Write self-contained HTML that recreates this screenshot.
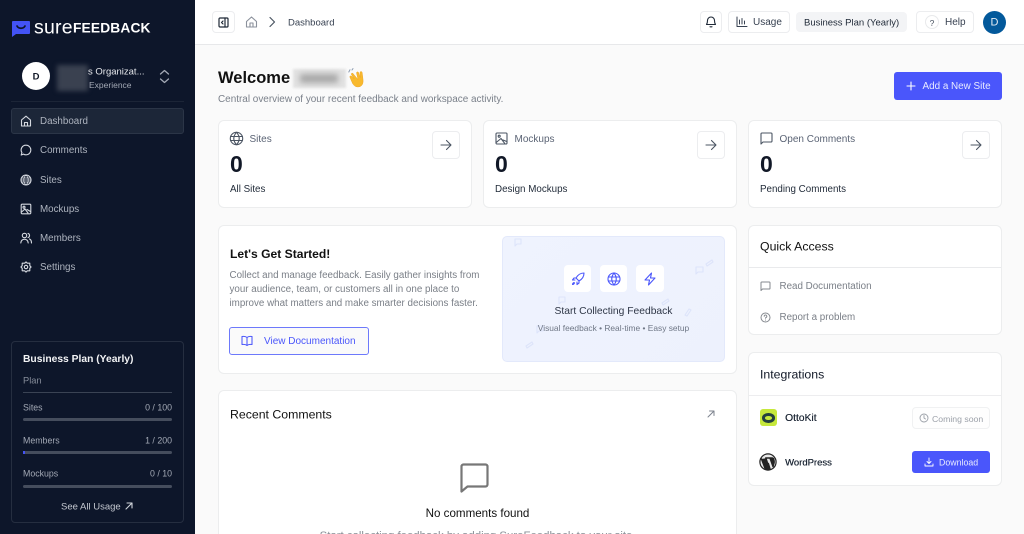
<!DOCTYPE html>
<html lang="en"><head><meta charset="utf-8"><title>SureFeedback Dashboard</title>
<style>
*{box-sizing:border-box}
html,body{margin:0;padding:0;width:1024px;height:534px;overflow:hidden;background:#fafafa;font-family:"Liberation Sans",sans-serif}
#p{position:relative;width:1024px;height:534px;overflow:hidden}
.a{position:absolute}
.t{position:absolute;white-space:nowrap;transform:translateY(-50%);line-height:1.2;margin-top:1.400px}
.c{text-align:center;transform:translate(-50%,-50%)}
.r{transform:translate(-100%,-50%)}
.card{position:absolute;background:#fff;border:1px solid #ecedee;border-radius:6px}
.btn{position:absolute;background:#fff;border:1px solid #ecedef;border-radius:4px}
svg{position:absolute;fill:none;stroke-linecap:round;stroke-linejoin:round}
.n{color:#aeb4bf;font-size:9.800px;left:40px}
.n2{stroke:#d5d9e0;stroke-width:1.100}
.bar{position:absolute;left:23px;width:149px;height:3px;border-radius:2px;background:#454d5d}
.sm{color:#a3a9b5;font-size:8.800px}
.lbl{color:#5b6475;font-size:10px}
.zero{color:#111827;font-size:23px;font-weight:bold}
.sub{color:#1f2937;font-size:9.800px}
</style></head><body><div id="p">

<!-- Sidebar -->
<div class="a" style="left:0;top:0;width:195px;height:534px;background:#0d162a"></div>
<svg style="left:11px;top:20px" width="20" height="18" viewBox="0 0 20 18"><path d="M2 1h16a1 1 0 0 1 1 1v11a1 1 0 0 1-1 1H5l-4 3V2a1 1 0 0 1 1-1z" fill="#4353f5"/><path d="M6 6c1.500 3 6.500 3 8 0" stroke="#0d162a" stroke-width="1.700"/></svg>
<div class="t" style="left:34px;top:27px;color:#fff;font-size:19.500px;letter-spacing:.2px">sure</div>
<div class="t" style="left:73px;top:28px;color:#fff;font-size:13.800px;font-weight:bold;letter-spacing:.12px">FEEDBACK</div>

<div class="a" style="left:22px;top:62px;width:28px;height:28px;border-radius:50%;background:#fff"></div>
<div class="t c" style="left:36px;top:76px;color:#111827;font-size:9.500px;font-weight:bold">D</div>
<div class="a" style="left:57px;top:65px;width:31px;height:26px;background:#3a4150;filter:blur(2.500px)"></div>
<div class="t" style="left:88px;top:71px;color:#e5e7eb;font-size:9.500px">s Organizat...</div>
<div class="t" style="left:89px;top:83.500px;color:#a3a9b5;font-size:8.500px">Experience</div>
<svg style="left:158px;top:69px" width="13" height="15" viewBox="0 0 13 15" stroke="#a3a9b5" stroke-width="1.300"><path d="M2.500 5l4-3.500 4 3.500M2.500 10l4 3.500 4-3.500"/></svg>
<div class="a" style="left:11px;top:101px;width:173px;height:1px;background:#1c2537"></div>

<div class="a" style="left:11px;top:108px;width:173px;height:26px;background:#1c2638;border:1px solid #2b3547;border-radius:3px"></div>
<svg class="n2" style="left:20px;top:115px" width="12" height="12" viewBox="0 0 12 12"><path d="M1.500 5L6 1.200 10.500 5v6h-9zM4.500 11V7.500h3V11"/></svg>
<div class="t n" style="top:121px">Dashboard</div>
<svg class="n2" style="left:20px;top:144px" width="12" height="12" viewBox="0 0 12 12"><path d="M6 1.200a4.800 4.800 0 1 1-2.500 8.900L1.200 11l.7-2.400A4.800 4.800 0 0 1 6 1.200z"/></svg>
<div class="t n" style="top:150px">Comments</div>
<svg class="n2" style="left:20px;top:173.500px" width="12" height="12" viewBox="0 0 12 12"><circle cx="6" cy="6" r="5"/><path d="M1 6h10M1.500 4h9M1.500 8h9M6 1c-3 3-3 7 0 10M6 1c3 3 3 7 0 10" stroke-width=".8"/></svg>
<div class="t n" style="top:179.500px">Sites</div>
<svg class="n2" style="left:20px;top:203px" width="12" height="12" viewBox="0 0 12 12"><rect x="1.200" y="1.200" width="9.600" height="9.600" rx="1"/><circle cx="4" cy="4.200" r="1"/><path d="M1.500 9L5 6l3 4M7 6.500l3.500 2"/></svg>
<div class="t n" style="top:208.500px">Mockups</div>
<svg class="n2" style="left:20px;top:232px" width="12" height="12" viewBox="0 0 12 12"><circle cx="4.500" cy="3.500" r="2.200"/><path d="M.8 11c0-5 7.400-5 7.400 0M8 1.400a2.200 2.200 0 0 1 0 4.200M9.500 7c1.200.5 2 1.800 2 4"/></svg>
<div class="t n" style="top:238px">Members</div>
<svg class="n2" style="left:20px;top:261px" width="12" height="12" viewBox="0 0 12 12"><path d="M6 .9l1.300 1.300h2.500v2.500L11.100 6 9.800 7.300v2.500H7.300L6 11.100 4.700 9.800H2.200V7.300L.9 6l1.300-1.300V2.200h2.500z"/><circle cx="6" cy="6" r="1.700"/></svg>
<div class="t n" style="top:267px">Settings</div>

<div class="a" style="left:11px;top:341px;width:173px;height:182px;border:1px solid #252e40;border-radius:4px"></div>
<div class="t" style="left:23px;top:358.500px;color:#f3f4f6;font-size:10.300px;font-weight:bold">Business Plan (Yearly)</div>
<div class="t" style="left:23px;top:380px;color:#858c99;font-size:9.300px">Plan</div>
<div class="a" style="left:23px;top:392px;width:149px;height:1px;background:#3a4354"></div>
<div class="t sm" style="left:23px;top:406.500px">Sites</div><div class="t sm r" style="left:172px;top:406.500px">0 / 100</div>
<div class="bar" style="top:418px"></div>
<div class="t sm" style="left:23px;top:440px">Members</div><div class="t sm r" style="left:172px;top:440px">1 / 200</div>
<div class="bar" style="top:451px"></div><div class="a" style="left:23px;top:451px;width:2px;height:3px;background:#4353f5"></div>
<div class="t sm" style="left:23px;top:473px">Mockups</div><div class="t sm r" style="left:172px;top:473px">0 / 10</div>
<div class="bar" style="top:485px"></div>
<div class="t" style="left:61px;top:505.500px;color:#c4c8d0;font-size:9.500px">See All Usage</div>
<svg style="left:124px;top:501px" width="10" height="10" viewBox="0 0 10 10" stroke="#d1d5db" stroke-width="1.100"><path d="M2 8l6-6M3 2h5v5"/></svg>

<!-- Header -->
<div class="a" style="left:195px;top:0;width:829px;height:44.500px;background:#fff;border-bottom:1px solid #e7e8ea"></div>
<div class="btn" style="left:212px;top:11px;width:23px;height:22px"></div>
<svg style="left:218px;top:17px" width="11" height="11" viewBox="0 0 11 11" stroke="#1f2937" stroke-width="1.200"><rect x="1" y="1" width="9" height="9" rx="1"/><path d="M7 1v9M5 4L3.500 5.500 5 7"/></svg>
<svg style="left:245px;top:16px" width="13" height="12" viewBox="0 0 13 12" stroke="#8b919c" stroke-width="1.100"><path d="M1.500 5.500L6.500 1l5 4.500V11h-10zM5 11V7h3v4"/></svg>
<svg style="left:268px;top:16px" width="8" height="12" viewBox="0 0 8 12" stroke="#4b5563" stroke-width="1.200"><path d="M2 1.500L6.500 6 2 10.500"/></svg>
<div class="t" style="left:288px;top:21.500px;color:#374151;font-size:9.500px">Dashboard</div>

<div class="btn" style="left:700px;top:11px;width:22px;height:22px"></div>
<svg style="left:705px;top:16px" width="12" height="12" viewBox="0 0 12 12" stroke="#1f2937" stroke-width="1.100"><path d="M6 1a3.500 3.500 0 0 0-3.500 3.500C2.500 7 1.500 8.500 1.500 8.500h9S9.500 7 9.500 4.500A3.500 3.500 0 0 0 6 1zM5 10.800h2"/></svg>
<div class="btn" style="left:728px;top:11px;width:62px;height:22px"></div>
<svg style="left:736px;top:16px" width="12" height="12" viewBox="0 0 12 12" stroke="#374151" stroke-width="1"><path d="M1 1v9.500h10M3.500 8V4M6 8V2.500M8.500 8V5"/></svg>
<div class="t" style="left:753px;top:22px;color:#374151;font-size:10px">Usage</div>
<div class="a" style="left:796px;top:12px;width:111px;height:20px;background:#f3f4f6;border-radius:4px"></div>
<div class="t" style="left:804px;top:21.500px;color:#1f2937;font-size:9.500px">Business Plan (Yearly)</div>
<div class="btn" style="left:916px;top:11px;width:58px;height:22px"></div>
<div class="a" style="left:925px;top:15px;width:14px;height:14px;border:1px solid #e8e9eb;border-radius:50%"></div>
<div class="t c" style="left:932px;top:21.500px;color:#4b5563;font-size:8.500px">?</div>
<div class="t" style="left:945px;top:22px;color:#374151;font-size:10px">Help</div>
<div class="a" style="left:983px;top:11px;width:23px;height:23px;border-radius:50%;background:#03599b"></div>
<div class="t c" style="left:994.500px;top:22px;color:#e5edf5;font-size:11px">D</div>

<!-- Welcome -->
<div class="t" style="left:218px;top:78px;color:#111;font-size:16.500px;font-weight:bold">Welcome</div>
<div class="a" style="left:293px;top:69px;width:53px;height:19px;background:#e2e2e2;filter:blur(1px)"></div>
<div class="a" style="left:300px;top:74px;width:38px;height:9px;background:#a9a9a9;filter:blur(3px)"></div>
<svg style="left:348px;top:68px" width="19" height="20" viewBox="0 0 19 20"><path d="M5 5.500l5 6-1.500-6.500c0-1.500 1.800-1.500 2.300 0l1.500 4.500-.3-5c.2-1.400 2-1.300 2.200.2l.8 6.500c.6 4.500-1 7.300-4.500 7.700-3 .3-4.500-1.300-6-3.500L2 9.500c-.8-1.200.7-2.200 1.700-1.200l2.500 2.500-2.700-4.100c-.7-1.300.7-2.200 1.500-1.200z" fill="#f8b92d" stroke="#e89a1a" stroke-width=".4"/><path d="M2 1.800L.8 4M5 .6L4 2" stroke="#8a9ab0" stroke-width="1"/></svg>
<div class="t" style="left:218px;top:98.500px;color:#7a808a;font-size:9.950px">Central overview of your recent feedback and workspace activity.</div>
<div class="a" style="left:894px;top:72px;width:108px;height:28px;background:#4a56fb;border-radius:3px"></div>
<svg style="left:906px;top:81px" width="10" height="10" viewBox="0 0 10 10" stroke="#fff" stroke-width="1.100"><path d="M5 1v8M1 5h8"/></svg>
<div class="t" style="left:922.500px;top:86px;color:#e8eaff;font-size:9.900px">Add a New Site</div>

<!-- Stat cards -->
<div class="card" style="left:218px;top:120px;width:254px;height:88px"></div>
<svg style="left:229px;top:131px" width="15" height="15" viewBox="0 0 15 15" stroke="#4b5563" stroke-width="1.100"><circle cx="7.500" cy="7.500" r="6.200"/><path d="M1.500 5.500h12M1.500 9.500h12M7.500 1.300c-3.500 4-3.500 8.400 0 12.400M7.500 1.300c3.500 4 3.500 8.400 0 12.400"/></svg>
<div class="t lbl" style="left:249.500px;top:138.500px">Sites</div>
<div class="btn" style="left:432px;top:131px;width:28px;height:28px"></div>
<svg style="left:440px;top:139px" width="12" height="12" viewBox="0 0 12 12" stroke="#4b5563" stroke-width="1.100"><path d="M1 6h10M6.500 1.500L11 6l-4.500 4.500"/></svg>
<div class="t zero" style="left:230px;top:163.500px">0</div>
<div class="t sub" style="left:230px;top:188.500px">All Sites</div>

<div class="card" style="left:483px;top:120px;width:254px;height:88px"></div>
<svg style="left:495px;top:132px" width="13" height="13" viewBox="0 0 13 13" stroke="#4b5563" stroke-width="1.100"><rect x="1" y="1" width="11" height="11" rx="1"/><circle cx="4.200" cy="4.200" r="1"/><path d="M1.200 10.500L6 6.500l4 5.300M8 8l3.800 1.500"/></svg>
<div class="t lbl" style="left:514.500px;top:138.500px">Mockups</div>
<div class="btn" style="left:697px;top:131px;width:28px;height:28px"></div>
<svg style="left:705px;top:139px" width="12" height="12" viewBox="0 0 12 12" stroke="#4b5563" stroke-width="1.100"><path d="M1 6h10M6.500 1.500L11 6l-4.500 4.500"/></svg>
<div class="t zero" style="left:495px;top:163.500px">0</div>
<div class="t sub" style="left:495px;top:188.500px">Design Mockups</div>

<div class="card" style="left:748px;top:120px;width:254px;height:88px"></div>
<svg style="left:760px;top:132px" width="13" height="13" viewBox="0 0 13 13" stroke="#4b5563" stroke-width="1.100"><path d="M1 2a1 1 0 0 1 1-1h9a1 1 0 0 1 1 1v7a1 1 0 0 1-1 1H3l-2 2z"/></svg>
<div class="t lbl" style="left:779.500px;top:138.500px">Open Comments</div>
<div class="btn" style="left:962px;top:131px;width:28px;height:28px"></div>
<svg style="left:970px;top:139px" width="12" height="12" viewBox="0 0 12 12" stroke="#4b5563" stroke-width="1.100"><path d="M1 6h10M6.500 1.500L11 6l-4.500 4.500"/></svg>
<div class="t zero" style="left:760px;top:163.500px">0</div>
<div class="t sub" style="left:760px;top:188.500px">Pending Comments</div>

<!-- Get started -->
<div class="card" style="left:218px;top:225px;width:519px;height:149px"></div>
<div class="t" style="left:230px;top:252.500px;color:#111;font-size:12.100px;font-weight:bold">Let's Get Started!</div>
<div class="t" style="left:229.500px;top:275px;color:#7a7f87;font-size:9.800px">Collect and manage feedback. Easily gather insights from</div>
<div class="t" style="left:229.500px;top:289px;color:#7a7f87;font-size:9.800px">your audience, team, or customers all in one place to</div>
<div class="t" style="left:229.500px;top:303px;color:#7a7f87;font-size:9.800px">improve what matters and make smarter decisions faster.</div>
<div class="a" style="left:229px;top:327px;width:140px;height:28px;border:1px solid #6d79fb;border-radius:3px;background:#fafafa"></div>
<svg style="left:241px;top:335px" width="12" height="12" viewBox="0 0 12 12" stroke="#4a56fb" stroke-width="1.050"><path d="M6 2.500C5 1.500 3 1.200 1 1.500v8c2-.3 4 0 5 1 1-1 3-1.300 5-1v-8c-2-.3-4 0-5 1zM6 2.500v8"/></svg>
<div class="t" style="left:264px;top:340.500px;color:#4a56fb;font-size:10px">View Documentation</div>

<div class="a" style="left:502px;top:236px;width:223px;height:126px;border-radius:5px;border:1px solid #e3e9fb;background:linear-gradient(135deg,#eff3fe,#edf1fd)"></div>
<svg style="left:502px;top:236px" width="223" height="126" viewBox="0 0 223 126" stroke="#dde4fa" stroke-width="1.100"><path d="M13 3h6v5h-4l-2 2zM194 31h7v5h-5l-2 2zM57 61h6v5h-4l-2 2zM35 90h6v5h-4l-2 2z"/><path d="M204 28l6-4 1 2-6 4zM160 67l6-4 1 2-6 4zM183 79l4-6 2 1-4 6zM24 110l6-4 1 2-6 4z"/></svg>
<div class="a" style="left:564px;top:265px;width:27px;height:27px;background:#fff;border-radius:4px"></div>
<div class="a" style="left:600px;top:265px;width:27px;height:27px;background:#fff;border-radius:4px"></div>
<div class="a" style="left:636px;top:265px;width:28px;height:27px;background:#fff;border-radius:4px"></div>
<svg style="left:571px;top:272px" width="14" height="14" viewBox="0 0 14 14" stroke="#4a56fb" stroke-width="1.100"><path d="M13 1c-3.500 0-6 1.500-8 5l3 3c3.500-2 5-4.500 5-8zM5 6H3L1.500 8H4M8 9v2l-2 1.500V10M3 10.500c-1 .5-1.500 1.500-1.500 2 .8 0 1.500-.5 2-1.500z"/></svg>
<svg style="left:607px;top:272px" width="14" height="14" viewBox="0 0 14 14" stroke="#4a56fb" stroke-width="1.100"><circle cx="7" cy="7" r="6"/><path d="M1.500 5h11M1.500 9h11M7 1c-3 4-3 8 0 12M7 1c3 4 3 8 0 12"/></svg>
<svg style="left:643px;top:272px" width="14" height="14" viewBox="0 0 14 14" stroke="#4a56fb" stroke-width="1.100"><path d="M8.500 1L2 8h4.500l-1 5L12 6H7.500z"/></svg>
<div class="t c" style="left:613.500px;top:310.500px;color:#2f3747;font-size:10.300px">Start Collecting Feedback</div>
<div class="t c" style="left:613.500px;top:326.500px;color:#6f7786;font-size:8.400px">Visual feedback • Real-time • Easy setup</div>

<!-- Recent -->
<div class="card" style="left:218px;top:390px;width:519px;height:160px"></div>
<div class="t" style="left:230px;top:413.500px;color:#111;font-size:12.300px">Recent Comments</div>
<svg style="left:706px;top:409px" width="10" height="10" viewBox="0 0 10 10" stroke="#7d838e" stroke-width="1"><path d="M2 8l6-6M3.500 2H8v4.500"/></svg>
<svg style="left:460px;top:463px" width="29" height="30" viewBox="0 0 29 30" stroke="#777" stroke-width="2.200"><path d="M1.500 3.500a2 2 0 0 1 2-2h22a2 2 0 0 1 2 2v18a2 2 0 0 1-2 2H7.500l-6 5z"/></svg>
<div class="t c" style="left:477.500px;top:512.500px;color:#111;font-size:11.600px">No comments found</div>
<div class="t c" style="left:476px;top:536px;color:#8a8f97;font-size:11.400px">Start collecting feedback by adding SureFeedback to your site</div>

<!-- Quick access -->
<div class="card" style="left:748px;top:225px;width:254px;height:110px"></div>
<div class="t" style="left:760px;top:246px;color:#111;font-size:12.300px">Quick Access</div>
<div class="a" style="left:749px;top:267px;width:252px;height:1px;background:#e9eaec"></div>
<svg style="left:760px;top:281px" width="11" height="11" viewBox="0 0 11 11" stroke="#85898f" stroke-width="1"><path d="M1 1.800a.8.800 0 0 1 .8-.8h7.400a.8.800 0 0 1 .8.800v5.400a.8.800 0 0 1-.8.800H2.500L1 9.500z"/></svg>
<div class="t" style="left:779.500px;top:286px;color:#7a7f87;font-size:9.800px">Read Documentation</div>
<svg style="left:760px;top:312px" width="11" height="11" viewBox="0 0 11 11" stroke="#85898f" stroke-width="1"><circle cx="5.500" cy="5.500" r="4.500"/><path d="M4.200 4.300a1.300 1.300 0 1 1 1.800 1.200c-.4.200-.5.500-.5.800M5.500 8v.1"/></svg>
<div class="t" style="left:779.500px;top:316.500px;color:#7a7f87;font-size:9.800px">Report a problem</div>

<!-- Integrations -->
<div class="card" style="left:748px;top:352px;width:254px;height:134px"></div>
<div class="t" style="left:760px;top:373.500px;color:#111827;font-size:12.300px">Integrations</div>
<div class="a" style="left:749px;top:395px;width:252px;height:1px;background:#ededef"></div>
<div class="a" style="left:760px;top:409px;width:16.500px;height:17px;background:#c6e83c;border-radius:3px"></div>
<div class="a" style="left:762px;top:413px;width:12.500px;height:9.500px;border:3px solid #24403f;border-radius:50%"></div>
<div class="t" style="left:785px;top:417.500px;color:#1f2937;font-size:10.300px;text-shadow:.2px 0 0 #1f2937">OttoKit</div>
<div class="btn" style="left:912px;top:407px;width:78px;height:22px;border-color:#f0f1f2;background:#fefefe"></div>
<svg style="left:919px;top:413px" width="10" height="10" viewBox="0 0 10 10" stroke="#9a9fa7" stroke-width=".9"><circle cx="5" cy="5" r="4"/><path d="M5 2.500V5l1.500 1"/></svg>
<div class="t" style="left:932px;top:417.500px;color:#9ca1a9;font-size:8.700px">Coming soon</div>

<svg style="left:759px;top:453px" width="18" height="18" viewBox="0 0 18 18"><circle cx="9" cy="9" r="8.700" fill="#222"/><circle cx="9" cy="9" r="7.500" fill="#e8e8e8"/><path d="M2.500 6l3.800 10L8.500 10 6.800 5h1.800M7.500 5h6M11 5l3 8.500 1-3.500c.5-2-.3-3.200-.5-4.500M9.300 10.500L7.500 16c1 .3 2 .3 3.500 0z" stroke="#222" stroke-width="1.500" fill="#222"/></svg>
<div class="t" style="left:785px;top:462px;color:#1f2937;font-size:9.500px;text-shadow:.2px 0 0 #1f2937">WordPress</div>
<div class="a" style="left:912px;top:451px;width:78px;height:22px;background:#4a56fb;border-radius:3px"></div>
<svg style="left:924px;top:457px" width="10" height="10" viewBox="0 0 10 10" stroke="#fff" stroke-width=".9"><path d="M5 1v5.500M3 4.500l2 2 2-2M1 7v2h8V7"/></svg>
<div class="t" style="left:939px;top:462px;color:#e8eaff;font-size:8.800px">Download</div>

</div></body></html>
